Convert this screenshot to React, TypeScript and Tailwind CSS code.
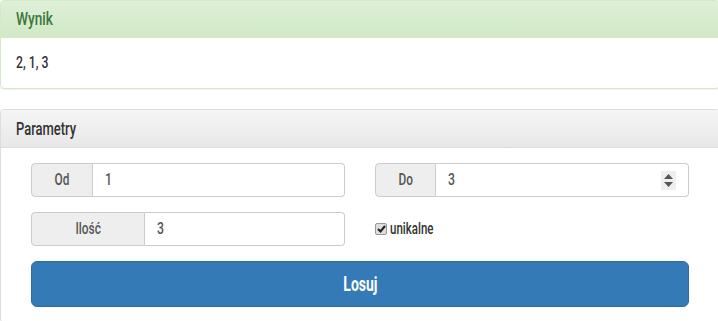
import React from 'react';

// no condensed face installed: Roboto squeezed horizontally stands in for it
const narrowL = 'inline-block origin-left scale-x-[0.72] whitespace-nowrap';
const narrowC = 'inline-block origin-center scale-x-[0.74] whitespace-nowrap';

function Field({ label, value, addonW, spinner }: { label: string; value: string; addonW: string; spinner?: boolean }) {
  return (
    <div className="flex h-[34px]">
      <span
        className={`${addonW} flex items-center justify-center rounded-l-[4px] border border-[#ccc] bg-[#eee] text-[16px] text-[#555]`}
      >
        <span className={narrowC}>{label}</span>
      </span>
      <div className="relative flex flex-1 items-center rounded-r-[4px] border border-l-0 border-[#ccc] bg-white pl-[12px] text-[17px] text-[#555]">
        <span className={narrowL}>{value}</span>
        {spinner && (
          <span className="absolute right-[12px] top-[7px] flex h-[19px] w-[15px] flex-col items-center justify-center gap-[3px] bg-[#eee]">
            <svg width="9" height="5" viewBox="0 0 9 5">
              <path d="M0 5 L4.5 0 L9 5 Z" fill="#555" />
            </svg>
            <svg width="9" height="5" viewBox="0 0 9 5">
              <path d="M0 0 L9 0 L4.5 5 Z" fill="#555" />
            </svg>
          </span>
        )}
      </div>
    </div>
  );
}

export default function App() {
  return (
    <div className="h-[321px] w-[718px] overflow-hidden bg-white font-['Roboto',sans-serif] font-medium">
      <div className="w-[720px]">
        {/* Wynik */}
        <div className="rounded-[4px] border border-[#d6e9c6] bg-white shadow-[0_1px_1px_rgba(0,0,0,0.05)]">
          <div className="flex h-[37px] items-center rounded-t-[3px] border-b border-[#d6e9c6] bg-gradient-to-b from-[#dff0d8] to-[#d0e9c6] px-[15px] text-[19px] text-[#3c763d]">
            <span className={narrowL}>Wynik</span>
          </div>
          <div className="flex h-[50px] items-center px-[15px] text-[17px] text-[#333]">
            <span className={narrowL}>2, 1, 3</span>
          </div>
        </div>

        {/* Parametry */}
        <div className="mt-[20px] rounded-[4px] border border-[#ddd] bg-white">
          <div className="flex h-[38px] items-center rounded-t-[3px] border-b border-[#ddd] bg-gradient-to-b from-[#f5f5f5] to-[#e8e8e8] px-[15px] text-[18px] text-[#333]">
            <span className={narrowL}>Parametry</span>
          </div>
          <div className="px-[30px] pb-[15px] pt-[15px]">
            <div className="grid grid-cols-2 gap-x-[30px] gap-y-[15px]">
              <Field label="Od" value="1" addonW="w-[62px]" />
              <Field label="Do" value="3" addonW="w-[61px]" spinner />
              <Field label="Ilość" value="3" addonW="w-[114px]" />
              <label className="flex h-[34px] items-center gap-[3px] text-[16px] text-[#333]">
                <span className="flex h-[12px] w-[12px] items-center justify-center rounded-[2px] border border-[#999] bg-[#ddd]">
                  <svg width="9" height="8" viewBox="0 0 9 8">
                    <path d="M1 4 L3.5 6.5 L8 1" fill="none" stroke="#222" strokeWidth="2" />
                  </svg>
                </span>
                <span className={narrowL}>unikalne</span>
              </label>
            </div>
            <button className="mt-[15px] flex h-[46px] w-full items-center justify-center rounded-[6px] border border-[#2e6da4] bg-[#337ab7] text-[20px] font-bold text-white">
              <span className="inline-block origin-center scale-x-[0.7]">Losuj</span>
            </button>
          </div>
        </div>
      </div>
    </div>
  );
}
